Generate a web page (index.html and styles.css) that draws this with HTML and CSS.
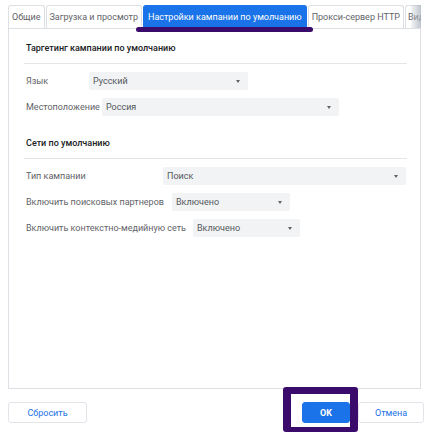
FILE: index.html
```html
<!DOCTYPE html>
<html lang="ru">
<head>
<meta charset="utf-8">
<link rel="stylesheet" href="styles.css">
</head>
<body>
<div class="page">
  <div class="tabs">
    <div class="tab">Общие</div>
    <div class="tab">Загрузка и просмотр</div>
    <div class="tab active">Настройки кампании по умолчанию</div>
    <div class="tab">Прокси-сервер HTTP</div>
    <div class="tab last">Вид</div>
    <div class="tab-fade"></div>
  </div>
  <div class="underline"></div>
  <div class="panel">
    <div class="section-title">Таргетинг кампании по умолчанию</div>
    <div class="sep"></div>
    <div class="row">
      <span class="label w-lang">Язык</span>
      <div class="select s-lang">Русский<span class="arrow"></span></div>
    </div>
    <div class="row">
      <span class="label w-loc">Местоположение</span>
      <div class="select s-loc">Россия<span class="arrow"></span></div>
    </div>
    <div class="section-title second">Сети по умолчанию</div>
    <div class="sep"></div>
    <div class="row">
      <span class="label w-type">Тип кампании</span>
      <div class="select s-type">Поиск<span class="arrow"></span></div>
    </div>
    <div class="row">
      <span class="label w-part">Включить поисковых партнеров</span>
      <div class="select s-part">Включено<span class="arrow"></span></div>
    </div>
    <div class="row">
      <span class="label w-disp">Включить контекстно-медийную сеть</span>
      <div class="select s-disp">Включено<span class="arrow"></span></div>
    </div>
  </div>
  <div class="footer">
    <button class="btn reset">Сбросить</button>
    <div class="right-btns">
      <button class="btn ok">OK</button>
      <button class="btn cancel">Отмена</button>
    </div>
  </div>
  <div class="highlight"></div>
</div>
</body>
</html>
```

FILE: styles.css
```css
* { box-sizing: border-box; }
html, body { margin: 0; padding: 0; background: #fff; }
body {
  font-family: Roboto, "Liberation Sans", Arial, sans-serif;
  font-size: 9px;
  color: #5f6368;
}
.page {
  position: relative;
  width: 427px;
  height: 432px;
  overflow: hidden;
}
.tabs {
  display: flex;
  gap: 1px;
  margin: 5px 6px 0 8px;
  height: 23px;
  overflow: hidden;
  position: relative;
}
.tab {
  flex: none;
  height: 23px;
  line-height: 22px;
  padding: 0 3px;
  border: 1px solid #dcdfe3;
  border-bottom: none;
  border-radius: 3px 3px 0 0;
  color: #5f6368;
  white-space: nowrap;
}
.tab.active {
  background: #1a73e8;
  border-color: #1a73e8;
  color: #fff;
  padding: 0 4px;
}
.tab.last { padding: 0 2px; }
.tab-fade {
  position: absolute;
  right: 0;
  top: 0;
  width: 10px;
  height: 23px;
  background: linear-gradient(90deg, rgba(200,204,210,0.2), rgba(170,178,188,0.75));
}
.underline {
  position: absolute;
  left: 136px;
  top: 27px;
  width: 177px;
  height: 5px;
  border-radius: 3px;
  background: #3b0b6b;
}
.panel {
  margin: 0 6px 0 8px;
  height: 361px;
  border: 1px solid #dcdfe3;
  padding: 13px 13px 0 15px;
}
.section-title {
  color: #202124;
  font-weight: 500;
  padding-left: 2px;
  line-height: 12px;
}
.section-title.second { margin-top: 21px; }
.sep {
  height: 1px;
  background: #e3e5e8;
  margin: 9px 0 8px;
}
.row {
  display: flex;
  align-items: center;
  height: 18px;
  margin-bottom: 8px;
  padding-left: 2px;
}
.label { flex: none; white-space: nowrap; }
.w-lang { width: 63px; }
.w-loc { width: 76px; }
.w-type { width: 137px; }
.w-part { width: 146px; }
.w-disp { width: 167px; }
.select {
  position: relative;
  height: 18px;
  line-height: 18px;
  background: #f1f3f4;
  border-radius: 2px;
  color: #54585d;
  padding-left: 4px;
}
.s-lang { width: 159px; }
.s-loc { width: 237px; }
.s-type { width: 243px; }
.s-part { width: 118px; }
.s-disp { width: 107px; }
.arrow {
  position: absolute;
  right: 8px;
  top: 8px;
  width: 0;
  height: 0;
  border-left: 2.5px solid transparent;
  border-right: 2.5px solid transparent;
  border-top: 3px solid #5f6368;
}
.footer {
  display: flex;
  justify-content: space-between;
  align-items: center;
  margin: 13px 3px 0 8px;
}
.right-btns { display: flex; gap: 8px; }
.btn {
  font-family: Roboto, "Liberation Sans", Arial, sans-serif;
  font-size: 9px;
  height: 21px;
  border-radius: 3px;
  border: 1px solid #e1e4e8;
  background: #fff;
  color: #1a73e8;
  padding: 0;
  cursor: pointer;
}
.reset { width: 79px; }
.ok {
  width: 48px;
  background: #1a73e8;
  border-color: #1a73e8;
  color: #fff;
  font-weight: 700;
}
.cancel { width: 66px; }
.highlight {
  position: absolute;
  left: 283px;
  top: 387px;
  width: 75px;
  height: 45px;
  border-style: solid;
  border-color: #3b0b6b;
  border-width: 7px 8px 5px 8px;
  border-radius: 3px;
}
```
